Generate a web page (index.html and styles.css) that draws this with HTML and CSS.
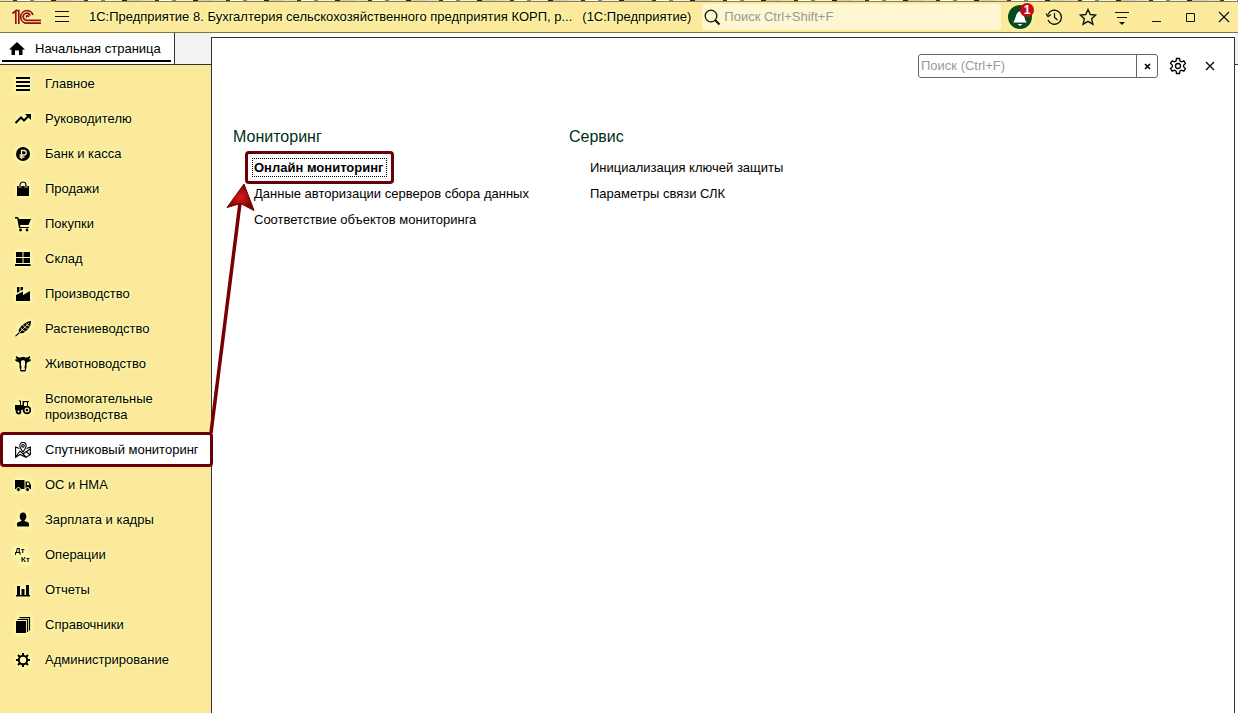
FILE: index.html
```html
<!DOCTYPE html>
<html lang="ru">
<head>
<meta charset="utf-8">
<title>1С:Предприятие</title>
<link rel="stylesheet" href="styles.css">
</head>
<body>
<div class="backdrop"></div>
<header class="titlebar">
  <svg class="logo" width="30" height="16" viewBox="0 0 30 16" fill="none" stroke="#96100f" stroke-width="1.700"><path d="M.5 4.500 3.800 1.800V15M4 1.500H6.800V15"/><path d="M21 6A6.300 6.300 0 1 0 15 14.200H29"/><path d="M18.200 6.500A3.600 3.600 0 1 0 15 11.300H29"/><path d="M16.500 8A1 1 0 1 0 15 8.500"/></svg>
  <button class="tool burger" aria-label="Меню"><svg width="16" height="16" viewBox="0 0 16 16" stroke="#111" stroke-width="1"><path d="M1 2.500H15M1 7.500H15M1 12.500H15"/></svg></button>
  <h1 class="title"><span>1С:Предприятие 8. Бухгалтерия сельскохозяйственного предприятия КОРП, р...</span><span>(1С:Предприятие)</span></h1>
  <label class="global-search">
    <svg width="17" height="17" viewBox="0 0 17 17" fill="none" stroke="#111"><circle cx="7" cy="7" r="5.800" stroke-width="1.300"/><path d="M11 11 15.500 15.500" stroke-width="2"/></svg>
    <input type="text" placeholder="Поиск Ctrl+Shift+F" aria-label="Глобальный поиск">
  </label>
  <div class="tools">
    <button class="tool bell" aria-label="Уведомления"><svg width="24" height="24" viewBox="0 0 24 24"><circle cx="12" cy="12" r="12" fill="#0b4a1c"/><path d="M5 17.500C8 15 7 9 11 6.500H13C17 9 16 15 19 17.500Z" fill="#fff"/><path d="M9.500 19H14.500L12 21Z" fill="#fff"/></svg><span class="badge">1</span></button>
    <button class="tool" aria-label="История"><svg width="18" height="18" viewBox="0 0 18 18" fill="none" stroke="#111" stroke-width="1.300"><path d="M3 6.500A7 7 0 1 1 3 12M1 5.500 3 8.500 6 6.500M9.500 5V9.500L12.500 12"/></svg></button>
    <button class="tool" aria-label="Избранное"><svg width="18" height="18" viewBox="0 0 18 18" fill="none" stroke="#111" stroke-width="1.400"><path d="M9 1.500 11.300 6.500 16.700 7 12.600 10.700 13.900 16.200 9 13.300 4.100 16.200 5.400 10.700 1.300 7 6.700 6.500Z"/></svg></button>
    <button class="tool" aria-label="Сервис и настройки"><svg width="18" height="18" viewBox="0 0 18 18" stroke="#111"><path d="M2 4.500H16M4 9.500H14"/><path d="M6 14H12L9 17Z" fill="#111" stroke="none"/></svg></button>
    <button class="tool" aria-label="Свернуть"><svg width="18" height="18" viewBox="0 0 18 18" stroke="#111"><path d="M5 13.500H14"/></svg></button>
    <button class="tool" aria-label="Развернуть"><svg width="18" height="18" viewBox="0 0 18 18" fill="none" stroke="#111"><path d="M5.500 5.500H13.500V13.500H5.500Z"/></svg></button>
    <button class="tool" aria-label="Закрыть"><svg width="18" height="18" viewBox="0 0 18 18" stroke="#111" stroke-width="1.200"><path d="M4 4 14 14M14 4 4 14"/></svg></button>
  </div>
</header>
<div class="workspace">
  <div class="left">
    <div class="tabs">
      <a class="tab" href="#home"><svg width="16" height="14" viewBox="0 0 16 14"><path d="M8 0 0 7.500H2.500V13H6V8.500H10V13H13.500V7.500H16Z"/></svg>Начальная страница</a>
    </div>
    <nav class="nav">
      <a class="item" href="#"><svg class="ico" viewBox="0 0 16 16"><path d="M1 1H15V3H1ZM1 5H15V7H1ZM1 9H15V11H1ZM1 13H15V15H1Z"/></svg>Главное</a>
      <a class="item" href="#"><svg class="ico" viewBox="0 0 16 16"><path d="M.5 12 6 6.500 9 9.500 13 5.500" fill="none" stroke="#000" stroke-width="2"/><path d="M10 3H16V9Z"/></svg>Руководителю</a>
      <a class="item" href="#"><svg class="ico" viewBox="0 0 16 16"><circle cx="8" cy="8" r="7"/><path d="M6.500 13V4.500H9A2.200 2.200 0 0 1 9 9H4.500M4.500 11H9.500" fill="none" stroke="#fcebb0" stroke-width="1.300"/></svg>Банк и касса</a>
      <a class="item" href="#"><svg class="ico" viewBox="0 0 16 16"><path d="M2 5H14V15H2Z"/><path d="M5 7V4A3 3 0 0 1 11 4V7" fill="none" stroke="#fff6c5" stroke-width="2.600"/><path d="M5 7V4A3 3 0 0 1 11 4V7" fill="none" stroke="#000" stroke-width="1.200"/></svg>Продажи</a>
      <a class="item" href="#"><svg class="ico" viewBox="0 0 16 16"><path d="M0 1H3L4 3H16L13.500 9H5L5.500 11H14V12H4L2.200 2.500H0Z"/><circle cx="5.500" cy="14" r="1.400"/><circle cx="12" cy="14" r="1.400"/></svg>Покупки</a>
      <a class="item" href="#"><svg class="ico" viewBox="0 0 16 16"><path d="M1 1H7.500V6H1ZM8.500 1H15V6H8.500ZM1 7H7.500V12H1ZM8.500 7H15V12H8.500ZM0 13H15.500V15H0Z"/></svg>Склад</a>
      <a class="item" href="#"><svg class="ico" viewBox="0 0 16 16"><path d="M1 15V9L8 5.500V9L15 5V15ZM2 1H4.500V5.500L2 7ZM5.500 1H8V3.800L5.500 5Z"/></svg>Производство</a>
      <a class="item" href="#"><svg class="ico" viewBox="0 0 16 16"><path d="M0 15 4 11C3 8 6 5 9 3C11 1 14 0 16 0C16 3 15 6 13 8C10 11 8 13 5 12L1 15.500Z"/><path d="M4 12 14 2M6 6.500 7 9 10 10M8.500 4 9.500 6.500 12.500 7.500M11.500 2.500 12 4 14.500 5" fill="none" stroke="#fbe9a0" stroke-width=".8"/></svg>Растениеводство</a>
      <a class="item" href="#"><svg class="ico" viewBox="0 0 16 16"><path d="M1.500 0C0 1.500 1 3 3 3L0 3.500C0 5 1.500 6 3.500 6L4.500 8V11.500L5.500 15.500H10.500L11.500 11.500V8L12.500 6C14.500 6 16 5 16 3.500L13 3C15 3 16 1.500 14.500 0C13.500 1.500 12 1.500 10.500 1.500L8 .8 5.500 1.500C4 1.500 2.500 1.500 1.500 0Z"/><path d="M6 5 8 4 10 5V9L9.500 11 10 14H6L6.500 11 6 9Z" fill="#fff6c5"/></svg>Животноводство</a>
      <a class="item" href="#"><svg class="ico" viewBox="0 0 16 16"><path d="M0 6H5V2.500H3.800V1.500H6V6H7.500V2H14V3H13V8H11L7 11H0ZM9 3.200V7H12V3.200Z" fill-rule="evenodd"/><g fill="#fcebb0" stroke="#000" stroke-width="1.800"><circle cx="12" cy="11" r="3.400"/><circle cx="3.500" cy="12.500" r="2"/></g><circle cx="12" cy="11" r="1.300"/></svg>Вспомогательные производства</a>
      <a class="item selected" href="#" aria-current="page"><svg class="ico" viewBox="0 0 16 16" fill="none" stroke="#000" stroke-width="1.100"><path d="M4.500 6.500.6 5V15.400L5 12.500 11 15.400 15.400 12.500V5L11.500 6.500M.6 15 5 9 8 12 15 7M8 12 11 15M11 9.500 15.400 13"/><path d="M8 10C6 7 4.800 5.500 4.800 3.700A3.200 3.200 0 0 1 11.200 3.700C11.200 5.500 10 7 8 10Z" fill="#fff"/><circle cx="8" cy="3.800" r="1.300"/></svg>Спутниковый мониторинг</a>
      <a class="item" href="#"><svg class="ico" viewBox="0 0 16 16"><path d="M0 3H9.500V12H0ZM10.500 4.500H14L16 8V12H10.500Z"/><path d="M12 5.500H13.500L14.500 8H12Z" fill="#fff6c5"/><g stroke="#fcebb0"><circle cx="3.500" cy="12.500" r="2"/><circle cx="12.500" cy="12.500" r="2"/></g></svg>ОС и НМА</a>
      <a class="item" href="#"><svg class="ico" viewBox="0 0 16 16"><ellipse cx="8" cy="4.500" rx="3.300" ry="4"/><path d="M2 14.500V12C2 10 5 9.500 6.500 9V7H9.500V9C11 9.500 14 10 14 12V14.500Z"/></svg>Зарплата и кадры</a>
      <a class="item" href="#"><svg class="ico dtkt" viewBox="0 0 16 16"><text x="0" y="6">Дт</text><text x="6" y="15">Кт</text></svg>Операции</a>
      <a class="item" href="#"><svg class="ico" viewBox="0 0 16 16"><path d="M1 13H15V14.500H1ZM2 4H5V13H2ZM6.500 7H9.500V13H6.500ZM11 3H14V13H11Z"/></svg>Отчеты</a>
      <a class="item" href="#"><svg class="ico" viewBox="0 0 16 16"><path d="M1 4H11V16H1Z"/><path d="M2.500 2.500H12.500V15M4.500 .6H14.500V13.500" fill="none" stroke="#000" stroke-width="1.200"/></svg>Справочники</a>
      <a class="item" href="#"><svg class="ico" viewBox="0 0 16 16" fill="none" stroke="#000"><circle cx="8" cy="8" r="4.200" stroke-width="2"/><path d="M8 1V4M8 12V15M1 8H4M12 8H15M3 3 5 5M11 11 13 13M13 3 11 5M5 11 3 13" stroke-width="2"/></svg>Администрирование</a>
    </nav>
  </div>
  <main class="panel">
    <div class="panel-tools">
      <div class="local-search">
        <input type="text" placeholder="Поиск (Ctrl+F)" aria-label="Поиск">
        <button aria-label="Очистить"><svg width="7" height="7" viewBox="0 0 7 7" stroke="#000" stroke-width="1.600"><path d="M1 1 6 6M6 1 1 6"/></svg></button>
      </div>
      <button class="tool" aria-label="Настройки"><svg width="18" height="18" viewBox="0 0 18 18" fill="none" stroke="#000" stroke-width="1.300"><path d="M7.500 1.500H10.500L11 4 12.500 4.800 14.800 3.800 16.500 6.500 14.600 8.200V9.800L16.500 11.500 14.800 14.200 12.500 13.200 11 14 10.500 16.500H7.500L7 14 5.500 13.200 3.200 14.200 1.500 11.500 3.400 9.800V8.200L1.500 6.500 3.200 3.800 5.500 4.800 7 4Z"/><circle cx="9" cy="9" r="2.500"/></svg></button>
      <button class="tool" aria-label="Закрыть панель"><svg width="18" height="18" viewBox="0 0 18 18" stroke="#000" stroke-width="1.200"><path d="M5 5 13 13M13 5 5 13"/></svg></button>
    </div>
    <div class="sections">
      <section>
        <h2>Мониторинг</h2>
        <ul>
          <li><a class="online" href="#"><b>Онлайн мониторинг</b></a></li>
          <li><a href="#">Данные авторизации серверов сбора данных</a></li>
          <li><a href="#">Соответствие объектов мониторинга</a></li>
        </ul>
      </section>
      <section>
        <h2>Сервис</h2>
        <ul>
          <li><a href="#">Инициализация ключей защиты</a></li>
          <li><a href="#">Параметры связи СЛК</a></li>
        </ul>
      </section>
    </div>
  </main>
  <div class="edge"></div>
  <svg class="arrow" width="60" height="260" viewBox="200 180 60 260" aria-hidden="true">
    <defs><radialGradient id="head"><stop offset="0" stop-color="#d81c1c"/><stop offset="1" stop-color="#7a0000"/></radialGradient></defs>
    <path d="M211 433 240 203" stroke="#780000" stroke-width="3.500"/>
    <path d="M244 184 227 207.500 240.500 203.500 254 210.500Z" fill="url(#head)" stroke="#6b0000"/>
  </svg>
</div>
</body>
</html>
```
FILE: styles.css
```css
* { box-sizing: border-box; }
body {
  margin: 0;
  min-height: 100vh;
  display: flex;
  flex-direction: column;
  background: #fff;
  color: #000;
  font: 13px/16px "Liberation Sans", Arial, sans-serif;
}
a { color: inherit; text-decoration: none; }
button { border: 0; padding: 0; background: none; font: inherit; }
input { font: inherit; border: 0; outline: 0; background: none; min-width: 0; color: #000; }
input::placeholder { color: #999; opacity: 1; }
svg { display: block; flex: none; }

.backdrop {
  height: 1px;
  background: repeating-linear-gradient(90deg, #ddd 0 13px, #333 13px 17px, #fff 17px 30px, #68a 30px 34px, #eee 34px 51px, #222 51px 56px, #ccc 56px 71px);
}
.titlebar {
  display: flex;
  align-items: center;
  height: 32px;
  padding-left: 12px;
  background: #fbea9c;
  border-top: 1px solid #8f8040;
  border-bottom: 1px solid #857533;
}
.tool { display: grid; place-items: center; width: 28px; height: 24px; }
.burger { width: 16px; margin-left: 12px; }
.title {
  display: flex;
  gap: 10px;
  margin: 0 11px 0 19px;
  font-size: 13px;
  font-weight: normal;
  white-space: nowrap;
  text-shadow: 0 0 2px #ffffb0, 0 0 3px #ffffb0, 0 0 4px #ffffb0;
}
.global-search {
  flex: 1;
  display: flex;
  align-items: center;
  gap: 3px;
  height: 26px;
  padding-left: 2px;
  border-radius: 3px;
  background: #fff6d2;
}
.global-search input { flex: 1; padding: 0; }
.tools { display: flex; gap: 6px; margin-left: 5px; }
.titlebar svg { filter: drop-shadow(0 0 2px #ffffb0); }
.bell { position: relative; }
.badge {
  position: absolute;
  top: -2px;
  right: 0;
  width: 14px;
  height: 14px;
  border-radius: 50%;
  background: #c40c14;
  color: #fff;
  font: bold 12px/14px "Liberation Sans", Arial, sans-serif;
}

.workspace { position: relative; flex: 1; display: flex; }
.left { flex: none; width: 211px; display: flex; flex-direction: column; }
.tabs { display: flex; height: 32px; background: #f2f2f2; border-bottom: 1px solid #333; }
.tab {
  display: flex;
  align-items: center;
  gap: 10px;
  width: 175px;
  padding-left: 9px;
  background: linear-gradient(#000, #000) 2px 27px / 169px 2px no-repeat #fff;
  border-right: 1px solid #333;
}
.nav { flex: 1; padding-top: 1px; background: #fbea9c; }
.item {
  display: flex;
  align-items: center;
  gap: 14px;
  min-height: 35px;
  padding: 10px 30px 9px 15px;
  text-shadow: 0 0 2px #ffffb0, 0 0 3px #ffffb0, 0 0 4px #ffffb0;
}
.ico { width: 16px; height: 16px; filter: drop-shadow(0 0 2px #ffffb0) drop-shadow(0 0 2px #ffffb0); }
.dtkt { overflow: visible; font: bold 8px "Liberation Sans", Arial, sans-serif; }
.selected {
  position: relative;
  z-index: 1;
  margin-right: -2px;
  padding: 7px 0 6px 12px;
  border: 3px solid #690006;
  border-radius: 4px;
  background: #fff;
  white-space: nowrap;
  text-shadow: none;
}
.selected .ico { filter: none; }

.panel { flex: 1; margin-top: 4px; border: 1px solid #333; border-bottom: 0; }
.panel-tools { display: flex; justify-content: flex-end; align-items: center; padding: 16px 10px 0 0; }
.local-search {
  display: flex;
  width: 240px;
  height: 24px;
  margin-right: 6px;
  border: 1px solid #666;
  border-radius: 3px;
}
.local-search input { flex: 1; padding: 0 2px; }
.local-search button { display: grid; place-items: center; width: 21px; border-left: 1px solid #666; }
.panel-tools .tool + .tool { margin-left: 4px; }
.sections { display: grid; grid-template-columns: 336px 336px; padding: 49px 0 0 21px; }
h2 { margin: 0; font-size: 16px; line-height: 20px; font-weight: normal; color: #003018; }
ul { list-style: none; margin: 8px 0 0; padding: 0 0 0 21px; }
li { height: 26px; line-height: 26px; white-space: nowrap; }
.online { position: relative; display: inline-block; }
.online b { padding-right: 2px; outline: 1px dotted #000; outline-offset: 1px; }
.online::before {
  content: "";
  position: absolute;
  inset: -4px -9px -3px;
  border: 3px solid #690006;
  border-radius: 4px;
}
.edge { width: 3px; height: 32px; background: #f2f2f2; border-bottom: 1px solid #333; }
.arrow { position: absolute; left: 200px; top: 147px; z-index: 2; pointer-events: none; }
```
